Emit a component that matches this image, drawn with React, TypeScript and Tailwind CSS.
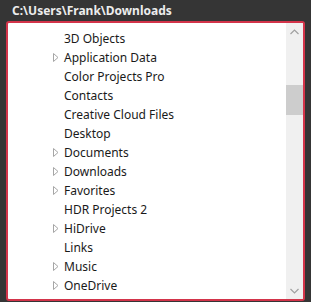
import { useState } from 'react';

interface Folder {
  name: string;
  hasChildren: boolean;
}

const folders: Folder[] = [
  { name: '3D Objects', hasChildren: false },
  { name: 'Application Data', hasChildren: true },
  { name: 'Color Projects Pro', hasChildren: false },
  { name: 'Contacts', hasChildren: false },
  { name: 'Creative Cloud Files', hasChildren: false },
  { name: 'Desktop', hasChildren: false },
  { name: 'Documents', hasChildren: true },
  { name: 'Downloads', hasChildren: true },
  { name: 'Favorites', hasChildren: true },
  { name: 'HDR Projects 2', hasChildren: false },
  { name: 'HiDrive', hasChildren: true },
  { name: 'Links', hasChildren: false },
  { name: 'Music', hasChildren: true },
  { name: 'OneDrive', hasChildren: true },
];

const Expander = () => (
  <svg width="6" height="9" viewBox="0 0 6 9" className="shrink-0">
    <path d="M0.5 0.5 L5 4.5 L0.5 8.5 Z" fill="none" stroke="#a6a6a6" strokeWidth="1" />
  </svg>
);

const Chevron = ({ up }: { up: boolean }) => (
  <svg width="9" height="6" viewBox="0 0 9 6">
    <path
      d={up ? 'M0.5 5 L4.5 1 L8.5 5' : 'M0.5 1 L4.5 5 L8.5 1'}
      fill="none"
      stroke="#a0a0a0"
      strokeWidth="1.2"
    />
  </svg>
);

const FolderTree = () => {
  const [selected] = useState<string | null>(null);

  return (
    <div
      className="w-[311px] h-[302px] bg-[#353535] flex flex-col overflow-hidden"
      style={{ fontFamily: '"Segoe UI", "Noto Sans", sans-serif' }}
    >
      <div className="h-[21px] pl-[12px] pt-[1px] text-[12px] font-bold leading-[20px] text-[#ececec]">
        C:\Users\Frank\Downloads
      </div>
      <div className="mx-[6px] mb-[1px] flex-1 flex border-2 border-[#d3344a] rounded-[3px] bg-white overflow-hidden">
        <div className="flex-1 pt-[6px] overflow-hidden">
          {folders.map((f) => (
            <div
              key={f.name}
              className={`h-[19px] flex items-center text-[12px] text-[#1a1a1a] ${
                selected === f.name ? 'bg-blue-100' : ''
              }`}
            >
              <div className="w-[56px] flex justify-end pr-[5px]">
                {f.hasChildren && <Expander />}
              </div>
              <span>{f.name}</span>
            </div>
          ))}
        </div>
        <div className="w-[17px] bg-[#f0f0f0] flex flex-col">
          <div className="h-[17px] flex items-center justify-center">
            <Chevron up />
          </div>
          <div className="flex-1 pt-[45px]">
            <div className="h-[30px] bg-[#cdcdcd]" />
          </div>
          <div className="h-[17px] flex items-center justify-center">
            <Chevron up={false} />
          </div>
        </div>
      </div>
    </div>
  );
};

export default function App() {
  return <FolderTree />;
}
